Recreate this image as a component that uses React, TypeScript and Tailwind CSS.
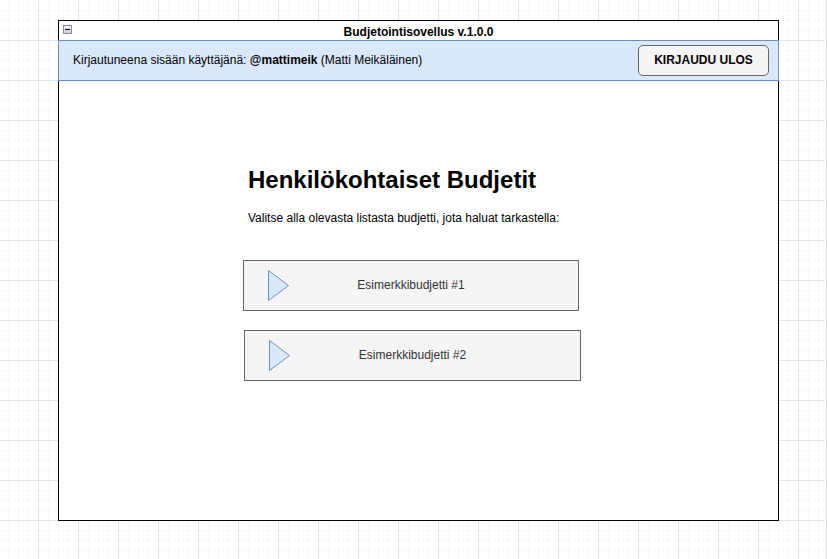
const budgets = [
  { id: 1, name: "Esimerkkibudjetti #1", place: "mr-[2px]" },
  { id: 2, name: "Esimerkkibudjetti #2", place: "ml-px" },
];

function CollapseIcon() {
  return (
    <svg width="9" height="9" viewBox="0 0 9 9" aria-hidden="true" className="block">
      <defs>
        <linearGradient id="collapse-face" x1="0" y1="0" x2="0" y2="1">
          <stop offset="0" stopColor="#f4f4f4" />
          <stop offset="1" stopColor="#cfcfcf" />
        </linearGradient>
      </defs>
      <rect x="0.5" y="0.5" width="8" height="8" fill="url(#collapse-face)" stroke="#868a9c" />
      <path d="M2 4.5H7" stroke="#000000" />
    </svg>
  );
}

function PlayTriangle() {
  return (
    <svg width="22" height="31" viewBox="0 0 22 31" aria-hidden="true" className="block">
      <path d="M0.5 0.5L20.5 15.5L0.5 30.5Z" fill="#dae8fc" stroke="#6c8ebf" strokeMiterlimit="10" />
    </svg>
  );
}

function TitleBar() {
  return (
    <div className="grid h-[19px] grid-cols-[1fr_auto_1fr] items-start px-1 pt-1">
      <button type="button" aria-label="Pienennä" className="w-[9px]">
        <CollapseIcon />
      </button>
      <div className="font-bold">Budjetointisovellus v.1.0.0</div>
    </div>
  );
}

function UserBar() {
  return (
    <header className="-mx-px flex h-[41px] items-center justify-between border border-[#6c8ebf] bg-[#dae8fc] pr-[9px] pl-[14px]">
      <p>
        Kirjautuneena sisään käyttäjänä: <b>@mattimeik</b> (Matti Meikäläinen)
      </p>
      <button
        type="button"
        className="h-[31px] w-[131px] rounded-[5px] border border-[#666666] bg-[#f5f5f5] font-bold"
      >
        KIRJAUDU ULOS
      </button>
    </header>
  );
}

export default function App() {
  return (
    <div className="flex min-h-screen border-r border-[#dddddd] bg-white pt-px pr-px font-['Liberation_Sans',Arial,sans-serif] text-[12px] leading-[15px] text-black">
      <div className="flex flex-1 bg-[linear-gradient(90deg,#e4e4e4_1px,transparent_1px),linear-gradient(#e4e4e4_1px,transparent_1px),linear-gradient(90deg,#f7f7f7_1px,transparent_1px),linear-gradient(#f7f7f7_1px,transparent_1px)] bg-[length:40px_40px,40px_40px,10px_10px,10px_10px] bg-[position:38px_39px,38px_39px,8px_9px,8px_9px] pt-[19px] pr-[46px] pb-[38px] pl-[58px]">
        <div className="flex flex-1 flex-col border border-black bg-white">
          <TitleBar />
          <UserBar />
          <main className="mx-auto w-full max-w-[351px] pt-[84px] pr-[13px]">
            <h1 className="pl-[5px] text-[24px] leading-[30px] font-bold">Henkilökohtaiset Budjetit</h1>
            <p className="mt-4 pl-[5px]">Valitse alla olevasta listasta budjetti, jota haluat tarkastella:</p>
            <ul className="mt-[34px] flex flex-col gap-[19px]">
              {budgets.map((b) => (
                <li key={b.id} className={b.place}>
                  <button
                    type="button"
                    className="grid h-[51px] w-full grid-cols-[1fr_auto_1fr] items-center border border-[#666666] bg-[#f5f5f5] pl-6 pr-6 text-[#333333]"
                  >
                    <PlayTriangle />
                    <span>{b.name}</span>
                  </button>
                </li>
              ))}
            </ul>
          </main>
        </div>
      </div>
    </div>
  );
}
